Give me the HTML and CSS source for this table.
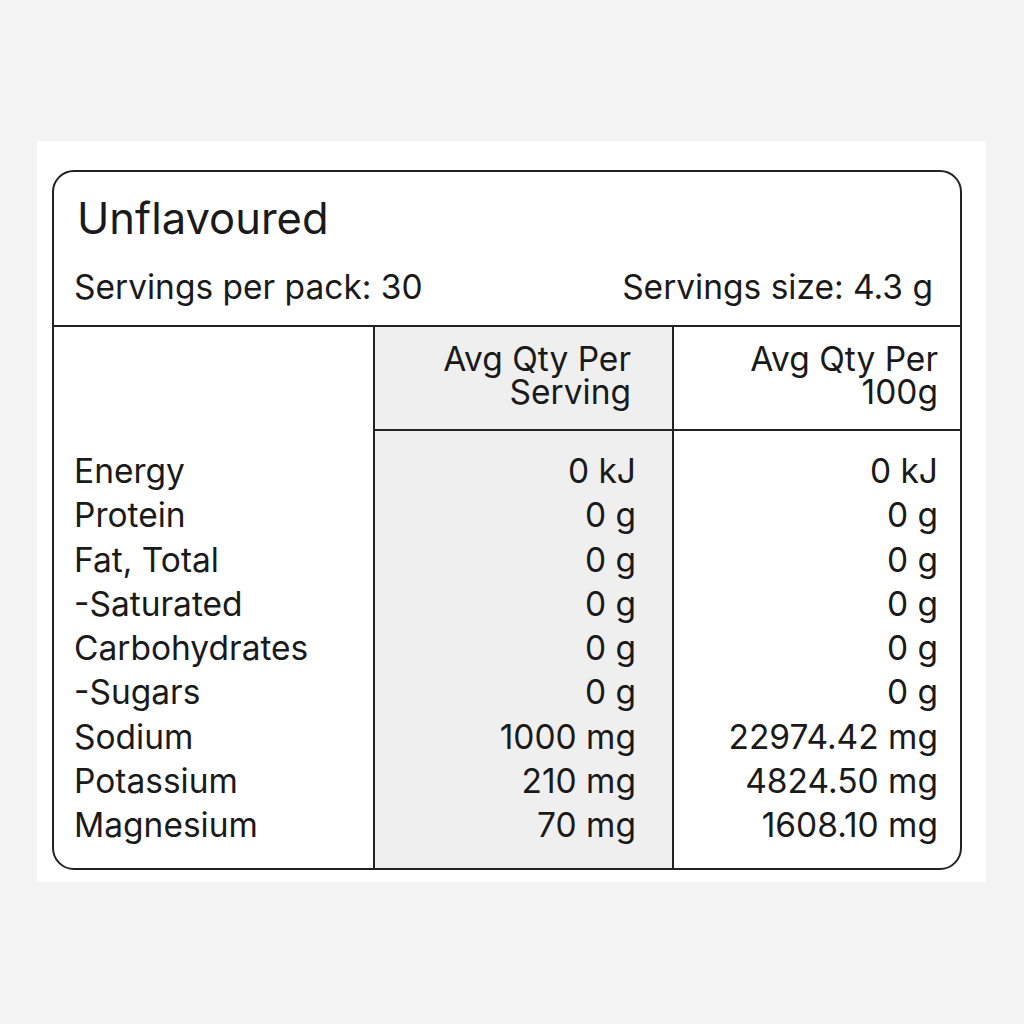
FILE: index.html
```html
<!DOCTYPE html>
<html lang="en">
<head>
<meta charset="utf-8">
<title>Nutrition Information</title>
<link rel="stylesheet" href="styles.css">
</head>
<body>
<div class="panel">
  <div class="card">
    <div class="head">
      <h1 class="title">Unflavoured</h1>
      <div class="servings">
        <span>Servings per pack: 30</span>
        <span>Servings size: 4.3 g</span>
      </div>
    </div>
    <div class="table">
      <div class="col col-labels">
        <div class="hcell"></div>
        <div class="body">
          <div>Energy</div>
          <div>Protein</div>
          <div>Fat, Total</div>
          <div>-Saturated</div>
          <div>Carbohydrates</div>
          <div>-Sugars</div>
          <div>Sodium</div>
          <div>Potassium</div>
          <div>Magnesium</div>
        </div>
      </div>
      <div class="col col-serv">
        <div class="hcell"><div>Avg Qty Per</div><div>Serving</div></div>
        <div class="body">
          <div>0 kJ</div>
          <div>0 g</div>
          <div>0 g</div>
          <div>0 g</div>
          <div>0 g</div>
          <div>0 g</div>
          <div>1000 mg</div>
          <div>210 mg</div>
          <div>70 mg</div>
        </div>
      </div>
      <div class="col col-100">
        <div class="hcell"><div>Avg Qty Per</div><div>100g</div></div>
        <div class="body">
          <div>0 kJ</div>
          <div>0 g</div>
          <div>0 g</div>
          <div>0 g</div>
          <div>0 g</div>
          <div>0 g</div>
          <div>22974.42 mg</div>
          <div>4824.50 mg</div>
          <div>1608.10 mg</div>
        </div>
      </div>
    </div>
  </div>
</div>
</body>
</html>
```
FILE: styles.css
```css
* { box-sizing: border-box; }
html, body { margin: 0; padding: 0; }
body {
  background: #f3f3f3;
  font-family: "Inter", "Liberation Sans", sans-serif;
  color: #1a1a1a;
  width: 1024px;
  height: 1024px;
}
.panel {
  margin: 141px 0 0 37px;
  width: 949px;
  height: 741px;
  background: #ffffff;
  padding: 29px 24px 0 15px;
}
.card {
  width: 910px;
  height: 700px;
  border: 2px solid #222;
  border-radius: 22px;
  overflow: hidden;
  display: flex;
  flex-direction: column;
}
.head {
  padding: 21px 27px 0 20px;
  border-bottom: 2px solid #222;
  height: 155px;
}
.title {
  margin: 0 0 0 3px;
  font-size: 43.5px;
  font-weight: 400;
  line-height: 50px;
}
.servings {
  display: flex;
  justify-content: space-between;
  font-size: 33.5px;
  line-height: 40px;
  margin-top: 24px;
}
.table {
  flex: 1;
  display: grid;
  grid-template-columns: 319px 301px 1fr;
  font-size: 33.5px;
}
.col { display: flex; flex-direction: column; }
.col-serv { background: #efefef; border-left: 2px solid #222; border-right: 2px solid #222; }
.hcell {
  height: 104px;
  padding-top: 16px;
  line-height: 33px;
  text-align: right;
}
.col-serv .hcell, .col-100 .hcell { border-bottom: 2px solid #222; }
.col-serv .hcell { padding-right: 41px; }
.col-100 .hcell { padding-right: 22px; }
.body {
  padding-top: 18px;
  line-height: 44.3px;
}
.col-labels .body { padding-left: 20px; }
.col-serv .body { text-align: right; padding-right: 36px; }
.col-100 .body { text-align: right; padding-right: 22px; }
```
